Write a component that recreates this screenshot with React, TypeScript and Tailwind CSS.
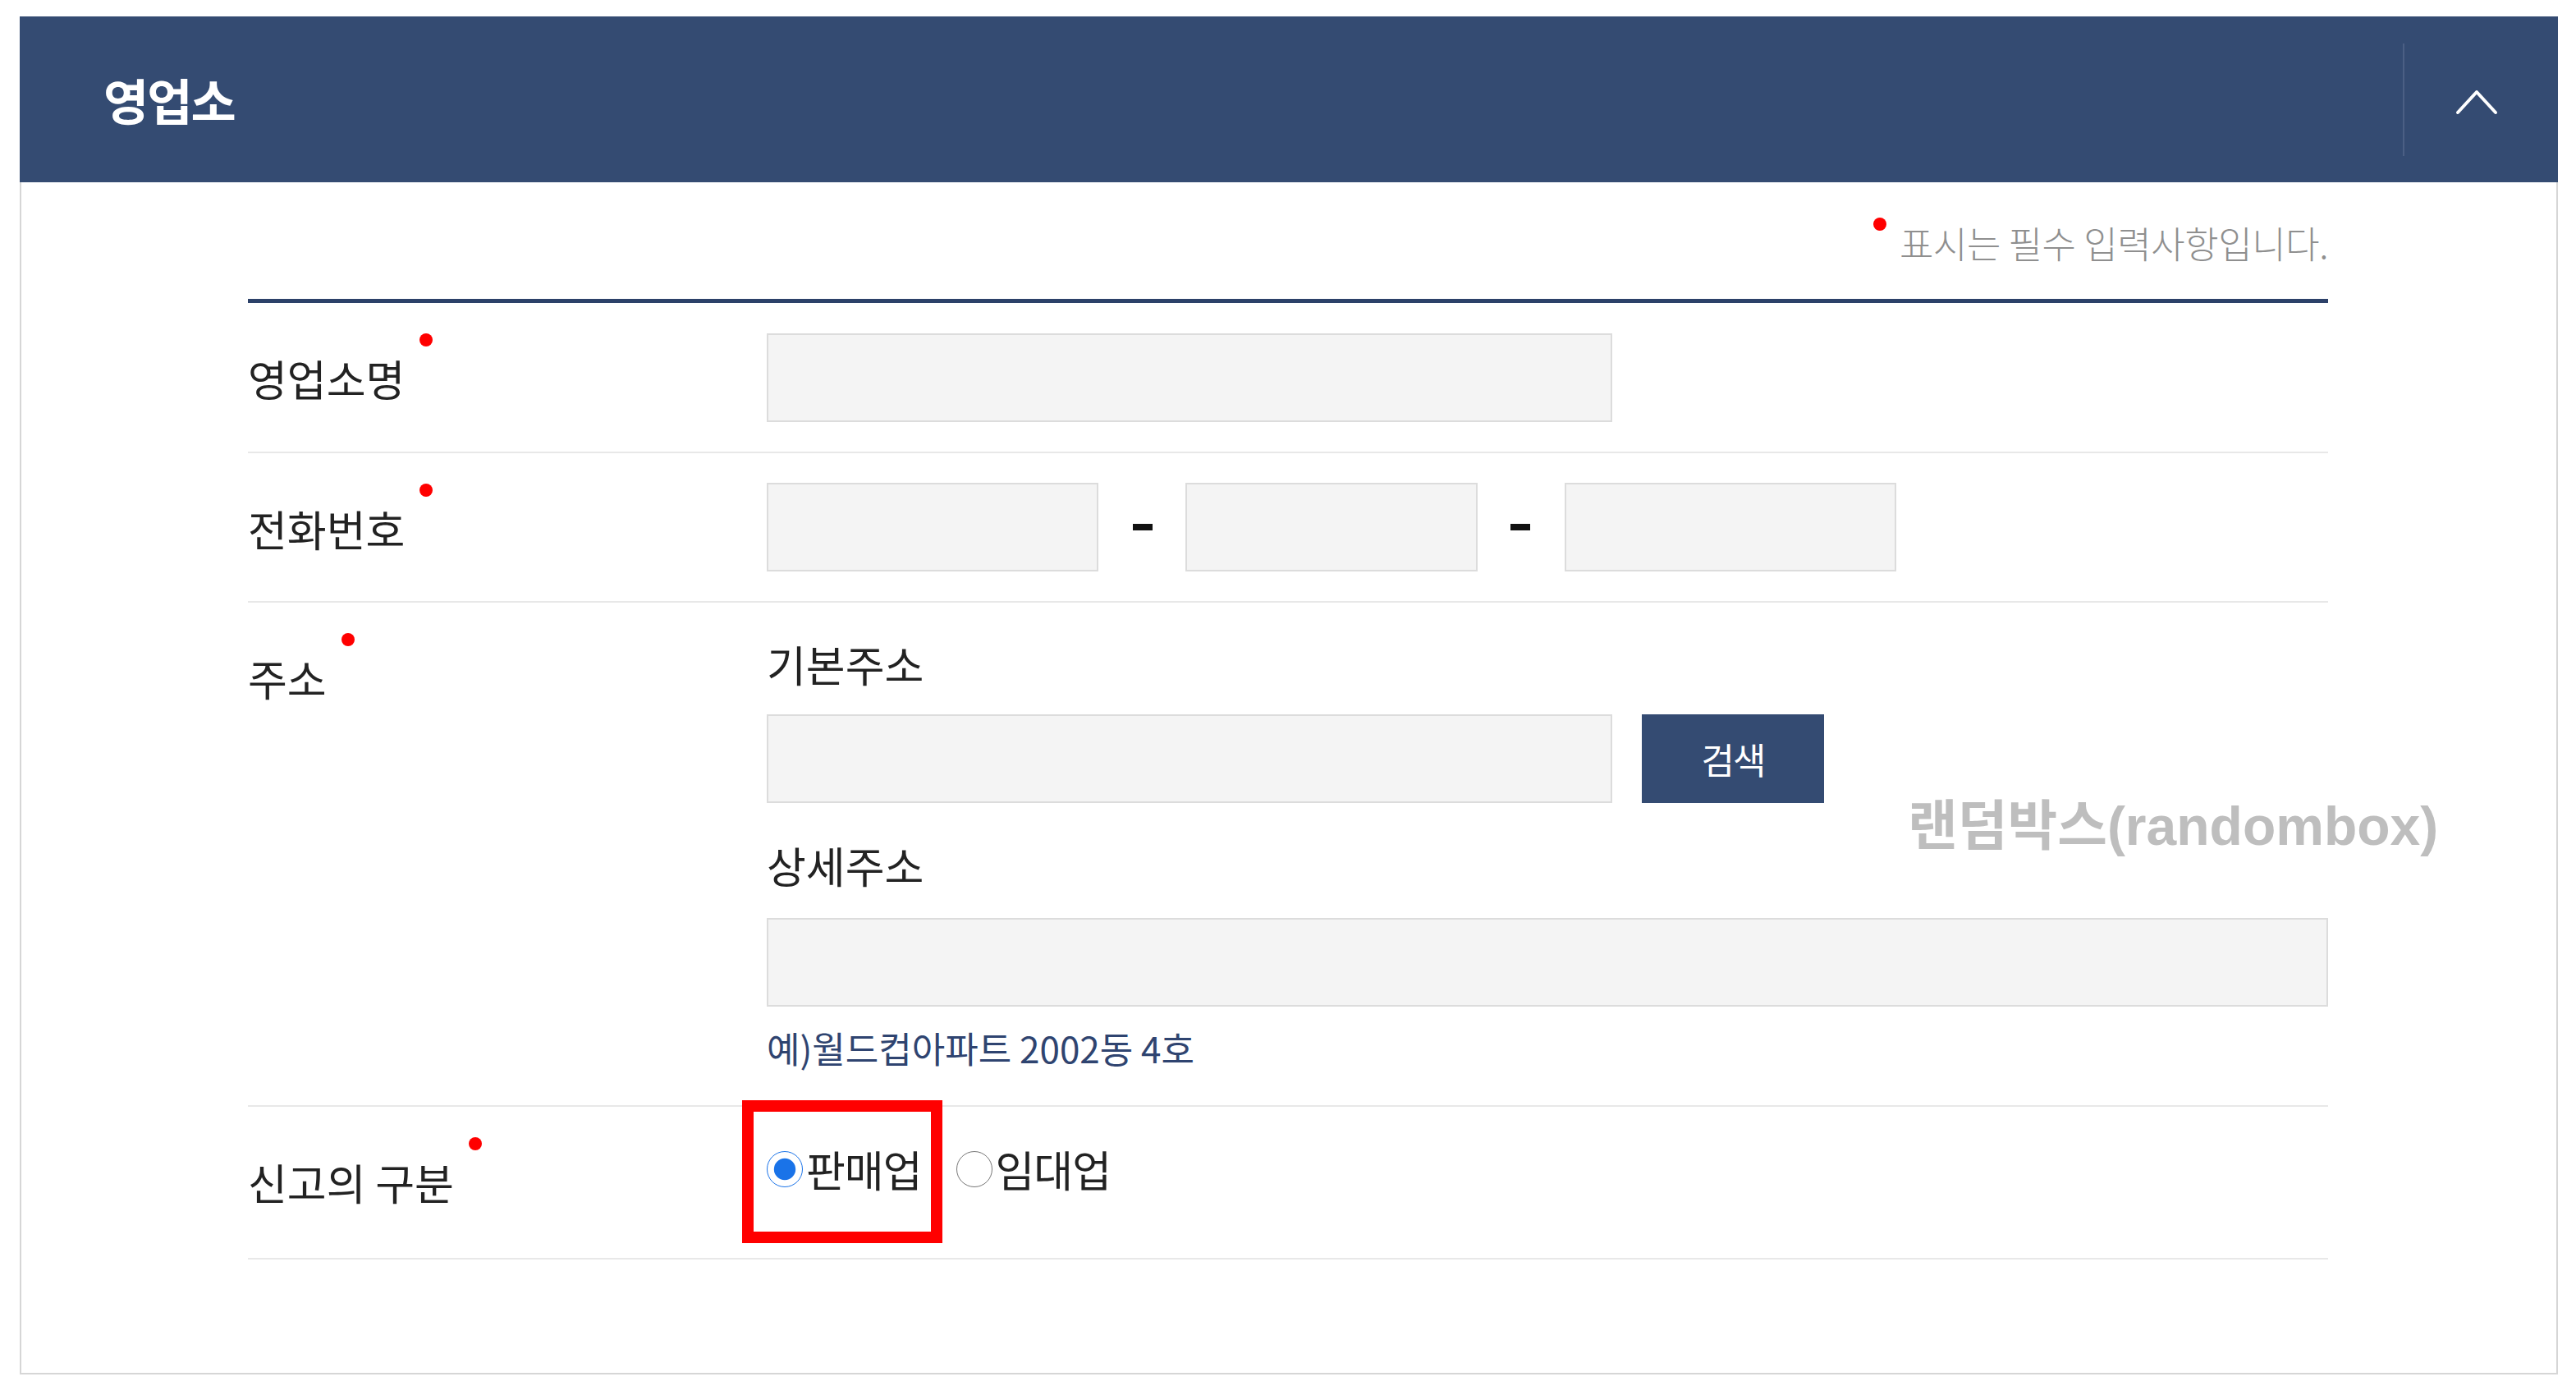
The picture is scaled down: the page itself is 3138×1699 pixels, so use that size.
import React from 'react'

const FONT = "font-['Noto_Sans_CJK_KR','Noto_Sans',sans-serif]"

function Label({ text }: { text: string }) {
  return (
    <div className="w-[632px] shrink-0 pt-[62px]">
      <span className="relative inline-block text-[52px] leading-[60px] tracking-[0px] text-[#222]">
        {text}
        <span className="absolute -right-[34px] -top-[25px] w-[16px] h-[16px] rounded-full bg-[#ff0000]" />
      </span>
    </div>
  )
}

function Field({ w }: { w: string }) {
  return <input className={`block h-[108px] ${w} bg-[#f4f4f4] border-2 border-[#dcdcdc] outline-none`} />
}

export default function App() {
  return (
    <div className={`min-h-screen bg-white pt-[20px] pl-[24px] ${FONT}`}>
      <div className="relative w-[3092px]">
        {/* header */}
        <div className="flex items-center h-[202px] bg-[#344b72]">
          <h1 className="flex-1 pl-[102px] text-[60px] font-bold tracking-[-2px] text-white">영업소</h1>
          <div className="w-[2px] h-[137px] bg-[#4b5f84]" />
          <button className="flex w-[187px] h-full items-center justify-center pr-[12px] pt-[6px]">
            <svg width="52" height="32" viewBox="0 0 52 32" fill="none" stroke="white" strokeWidth="4" strokeLinecap="round" strokeLinejoin="round">
              <polyline points="3,29 26,4 49,29" />
            </svg>
          </button>
        </div>

        {/* body */}
        <div className="border-x-2 border-b-2 border-[#d6d6d6] pl-[276px] pr-[278px] pb-[138px]">
          <p className="flex justify-end pt-[49px] text-[45px] leading-[50px] font-light tracking-[-0.4px] text-[#8f8f8f]">
            <span className="relative">
              <span className="absolute -left-[32px] -top-[6px] w-[16px] h-[16px] rounded-full bg-[#ff0000]" />
              표시는 필수 입력사항입니다.
            </span>
          </p>

          <div className="mt-[43px] border-t-[5px] border-[#2c4169]">
            {/* 영업소명 */}
            <div className="flex border-b-2 border-[#e8e8e8]">
              <Label text="영업소명" />
              <div className="pt-[37px] pb-[36px]">
                <Field w="w-[1030px]" />
              </div>
            </div>

            {/* 전화번호 */}
            <div className="flex border-b-2 border-[#e8e8e8]">
              <Label text="전화번호" />
              <div className="flex items-center py-[36px]">
                <Field w="w-[404px]" />
                <span className="ml-[42px] mr-[40px] w-[24px] h-[8px] bg-[#111]" />
                <Field w="w-[356px]" />
                <span className="ml-[40px] mr-[42px] w-[24px] h-[8px] bg-[#111]" />
                <Field w="w-[404px]" />
              </div>
            </div>

            {/* 주소 */}
            <div className="flex border-b-2 border-[#e8e8e8]">
              <Label text="주소" />
              <div className="flex-1 pt-[45px] pb-[45px]">
                <p className="text-[52px] leading-[60px] tracking-[0px] text-[#222]">기본주소</p>
                <div className="mt-[31px] flex">
                  <Field w="w-[1030px]" />
                  <button className="ml-[36px] w-[222px] h-[108px] bg-[#344b72] text-[44px] tracking-[-2px] text-white">검색</button>
                </div>
                <p className="mt-[46px] text-[52px] leading-[60px] tracking-[0px] text-[#222]">상세주소</p>
                <div className="mt-[34px]">
                  <Field w="w-full" />
                </div>
                <p className="mt-[25px] text-[44px] leading-[50px] tracking-[0px] text-[#2f4470]">예)월드컵아파트 2002동 4호</p>
              </div>
            </div>

            {/* 신고의 구분 */}
            <div className="flex border-b-2 border-[#e8e8e8]">
              <Label text="신고의 구분" />
              <div className="pt-[46px] pb-[78px]">
                <div className="relative flex items-center h-[60px] text-[52px] tracking-[-1px] text-[#222]">
                  <span className="absolute -left-[30px] -top-[54px] w-[244px] h-[174px] border-[14px] border-[#ff0000]" />
                  <label className="flex items-center">
                    <input type="radio" name="kind" defaultChecked className="m-0 w-[44px] h-[44px] accent-[#1a73e8]" />
                    <span className="ml-[4px]">판매업</span>
                  </label>
                  <label className="ml-[42px] flex items-center">
                    <input type="radio" name="kind" className="m-0 w-[44px] h-[44px]" />
                    <span className="ml-[4px]">임대업</span>
                  </label>
                </div>
              </div>
            </div>
          </div>
        </div>

        {/* watermark */}
        <span className="absolute left-[2300px] top-[951px] text-[66px] leading-[70px] font-bold text-[#bebebe] font-['Liberation_Sans','Noto_Sans_CJK_KR',sans-serif]">
          랜덤박스(randombox)
        </span>
      </div>
    </div>
  )
}
